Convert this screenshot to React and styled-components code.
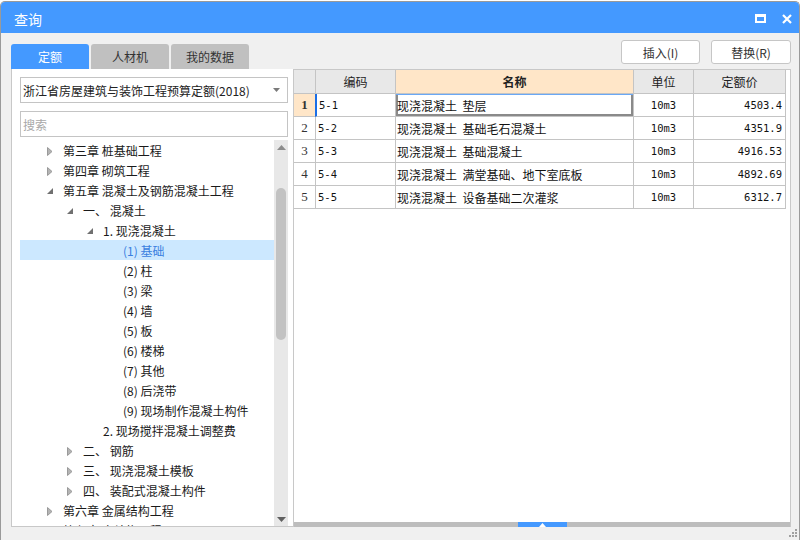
import React from 'react';
import styled, { createGlobalStyle } from 'styled-components';

const GlobalStyle = createGlobalStyle`
  html, body {
    margin: 0;
    padding: 0;
    background: #fff;
  }
  body {
    font-family: "Noto Sans CJK SC", "Noto Sans", sans-serif;
    font-size: 12px;
    color: #222;
  }
  * {
    box-sizing: border-box;
  }
`;

const Screen = styled.div`
  width: 800px;
  height: 540px;
  overflow: hidden;
  padding-top: 1px;
  background: #fff;
`;

const Dialog = styled.div`
  position: relative;
  height: 539px;
  display: flex;
  flex-direction: column;
  border: 1px solid #9a9a9a;
  border-bottom: none;
  border-radius: 5px 5px 0 0;
  overflow: hidden;
  background: #f0f0f0;
`;

const TitleBar = styled.div`
  height: 31px;
  flex-shrink: 0;
  display: flex;
  align-items: center;
  justify-content: space-between;
  padding: 2px 7px 0 13px;
  background: #4499ff;
  color: #fff;
  font-size: 14px;
`;

const WinButtons = styled.div`
  display: flex;
  align-items: center;
  gap: 16px;
`;

const Body = styled.div`
  flex: 1;
  display: flex;
  flex-direction: column;
  padding: 0 8px 0 10px;
`;

const TopBar = styled.div`
  height: 36px;
  display: flex;
  justify-content: space-between;
`;

const Tabs = styled.div`
  display: flex;
  gap: 2px;
  align-self: flex-end;
`;

const Tab = styled.div`
  width: ${p => p.$w || 78}px;
  height: 25px;
  display: flex;
  align-items: center;
  justify-content: center;
  border-radius: 3px 3px 0 0;
  background: ${p => (p.$active ? '#4499ff' : '#c0c0c0')};
  color: ${p => (p.$active ? '#fff' : '#333')};
  font-size: 12px;
`;

const Actions = styled.div`
  display: flex;
  gap: 11px;
  margin-top: 7px;
`;

const Button = styled.button`
  width: ${p => p.$w}px;
  height: 24px;
  padding: 0;
  background: #fff;
  border: 1px solid #c6c6c6;
  border-radius: 3px;
  font-family: inherit;
  font-size: 12px;
  color: #333;
`;

const Main = styled.div`
  height: 458px;
  display: flex;
`;

const LeftPanel = styled.div`
  width: 282px;
  display: flex;
  flex-direction: column;
  padding: 8px 5px 0 8px;
  background: #fff;
  border-left: 1px solid #c8c8c8;
  border-bottom: 1px solid #c8c8c8;
`;

const Select = styled.div`
  height: 26px;
  display: flex;
  align-items: center;
  justify-content: space-between;
  padding: 0 7px 0 2px;
  border: 1px solid #c4c4c4;
  font-size: 12px;
  color: #222;
`;

const Search = styled.div`
  height: 26px;
  margin-top: 8px;
  display: flex;
  align-items: center;
  padding-left: 2px;
  border: 1px solid #c4c4c4;
  color: #a8a8a8;
  font-size: 12px;
`;

const TreeArea = styled.div`
  flex: 1;
  margin-top: 3px;
  display: flex;
  overflow: hidden;
`;

const TreeList = styled.div`
  flex: 1;
  overflow: hidden;
`;

const TreeRow = styled.div`
  height: 20px;
  display: flex;
  align-items: center;
  padding-left: ${p => 23 + p.$level * 20}px;
  background: ${p => (p.$selected ? '#cce8ff' : 'transparent')};
  color: ${p => (p.$selected ? '#3a7fe0' : '#1a1a1a')};
  font-size: 12px;
  white-space: pre;
`;

const Toggle = styled.span`
  width: 20px;
  height: 20px;
  flex-shrink: 0;
  display: flex;
  align-items: center;
  padding: 2px 0 0 4px;
`;

const VScroll = styled.div`
  width: 14px;
  display: flex;
  flex-direction: column;
  align-items: center;
  background: #e8e8e8;
`;

const ScrollArrow = styled.div`
  height: 14px;
  display: flex;
  align-items: center;
  justify-content: center;
`;

const Thumb = styled.div`
  width: 10px;
  height: 152px;
  margin-top: 34px;
  border-radius: 5px;
  background: #c2c2c2;
`;

const Filler = styled.div`
  flex: 1;
`;

const RightPanel = styled.div`
  width: 498px;
  margin-left: 0;
  display: flex;
  flex-direction: column;
  background: #fff;
  border: 1px solid #c8c8c8;
  border-bottom: none;
`;

const Grid = styled.div`
  display: grid;
  grid-template-columns: 22px 80px 238px 60px 92px;
  width: 492px;
`;

const Cell = styled.div`
  height: ${p => (p.$head ? 24 : 23)}px;
  display: flex;
  align-items: center;
  justify-content: ${p => p.$align || 'flex-start'};
  padding: ${p => p.$pad || '0'};
  border-right: 1px solid #c4c4c4;
  border-bottom: 1px solid #c4c4c4;
  background: ${p => p.$bg || '#fff'};
  font-weight: ${p => (p.$bold ? 700 : 400)};
  white-space: pre;
  overflow: hidden;
`;

const HeadCell = styled(Cell)`
  font-size: 12px;
  color: #222;
`;

const NumCell = styled(Cell)`
  font-family: "Liberation Serif", serif;
  font-size: 13px;
  color: #333;
`;

const MonoCell = styled(Cell)`
  font-family: "DejaVu Sans Mono", "Liberation Mono", monospace;
  font-size: 10.5px;
  color: #111;
  border-left: ${p => (p.$mark ? '2px solid #1a6ee6' : 'none')};
  margin-left: ${p => (p.$mark ? '-1px' : '0')};
`;

const NameCell = styled(Cell)`
  font-size: 12px;
  color: #111;
  box-shadow: ${p => (p.$focus ? 'inset 0 1px 0 #6aa8f5, inset 2px 0 0 #8a8a8a, inset -2px 0 0 #8a8a8a, inset 0 -2px 0 #8a8a8a' : 'none')};
`;

const HScroll = styled.div`
  height: 5px;
  margin-top: auto;
  display: flex;
  justify-content: center;
  background: #bdbdbd;
`;

const HThumb = styled.div`
  width: 49px;
  display: flex;
  align-items: center;
  justify-content: center;
  background: #4499ff;
`;

const Grip = styled.svg`
  position: absolute;
  right: 1px;
  bottom: 2px;
`;

const tree = [
  { level: 0, state: 'closed', text: '第三章 桩基础工程' },
  { level: 0, state: 'closed', text: '第四章 砌筑工程' },
  { level: 0, state: 'open', text: '第五章 混凝土及钢筋混凝土工程' },
  { level: 1, state: 'open', text: '一、 混凝土' },
  { level: 2, state: 'open', text: '1. 现浇混凝土' },
  { level: 3, text: '(1) 基础', selected: true },
  { level: 3, text: '(2) 柱' },
  { level: 3, text: '(3) 梁' },
  { level: 3, text: '(4) 墙' },
  { level: 3, text: '(5) 板' },
  { level: 3, text: '(6) 楼梯' },
  { level: 3, text: '(7) 其他' },
  { level: 3, text: '(8) 后浇带' },
  { level: 3, text: '(9) 现场制作混凝土构件' },
  { level: 2, text: '2. 现场搅拌混凝土调整费' },
  { level: 1, state: 'closed', text: '二、 钢筋' },
  { level: 1, state: 'closed', text: '三、 现浇混凝土模板' },
  { level: 1, state: 'closed', text: '四、 装配式混凝土构件' },
  { level: 0, state: 'closed', text: '第六章 金属结构工程' },
  { level: 0, state: 'closed', text: '第七章 木结构工程' },
];

const rows = [
  { no: 1, code: '5-1', name: '现浇混凝土  垫层', unit: '10m3', price: '4503.4' },
  { no: 2, code: '5-2', name: '现浇混凝土  基础毛石混凝土', unit: '10m3', price: '4351.9' },
  { no: 3, code: '5-3', name: '现浇混凝土  基础混凝土', unit: '10m3', price: '4916.53' },
  { no: 4, code: '5-4', name: '现浇混凝土  满堂基础、地下室底板', unit: '10m3', price: '4892.69' },
  { no: 5, code: '5-5', name: '现浇混凝土  设备基础二次灌浆', unit: '10m3', price: '6312.7' },
];

function Arrow({ state }) {
  if (state === 'closed') {
    return (
      <svg width="6" height="9" viewBox="0 0 6 9">
        <polygon points="0.5,0.5 5,4.5 0.5,8.5" fill="#b4b4b4" stroke="#9a9a9a" strokeWidth="1" />
      </svg>
    );
  }
  if (state === 'open') {
    return (
      <svg width="6" height="6" viewBox="0 0 6 6">
        <polygon points="6,0 6,6 0,6" fill="#707070" />
      </svg>
    );
  }
  return null;
}

export default function App() {
  return (
    <Screen>
      <GlobalStyle />
      <Dialog>
        <TitleBar>
          <span>查询</span>
          <WinButtons>
            <svg width="11" height="9" viewBox="0 0 11 9">
              <rect x="1" y="1.5" width="9" height="6.5" fill="none" stroke="#fff" strokeWidth="2" />
              <rect x="0" y="0" width="11" height="3" fill="#fff" />
            </svg>
            <svg width="10" height="10" viewBox="0 0 10 10">
              <path d="M1 1 L9 9 M9 1 L1 9" stroke="#fff" strokeWidth="2.2" />
            </svg>
          </WinButtons>
        </TitleBar>
        <Body>
          <TopBar>
            <Tabs>
              <Tab $active>定额</Tab>
              <Tab $w={78}>人材机</Tab>
              <Tab $w={78}>我的数据</Tab>
            </Tabs>
            <Actions>
              <Button $w={79}>插入(I)</Button>
              <Button $w={80}>替换(R)</Button>
            </Actions>
          </TopBar>
          <Main>
            <LeftPanel>
              <Select>
                <span>浙江省房屋建筑与装饰工程预算定额(2018)</span>
                <svg width="7" height="4" viewBox="0 0 7 4">
                  <polygon points="0,0 7,0 3.5,4" fill="#7a7a7a" />
                </svg>
              </Select>
              <Search>搜索</Search>
              <TreeArea>
                <TreeList>
                  {tree.map((t, i) => (
                    <TreeRow key={i} $level={t.level} $selected={t.selected}>
                      <Toggle>
                        <Arrow state={t.state} />
                      </Toggle>
                      {t.text}
                    </TreeRow>
                  ))}
                </TreeList>
                <VScroll>
                  <ScrollArrow>
                    <svg width="9" height="5" viewBox="0 0 9 5">
                      <polygon points="0,5 9,5 4.5,0" fill="#8c8c8c" />
                    </svg>
                  </ScrollArrow>
                  <Thumb />
                  <Filler />
                  <ScrollArrow>
                    <svg width="9" height="5" viewBox="0 0 9 5">
                      <polygon points="0,0 9,0 4.5,5" fill="#606060" />
                    </svg>
                  </ScrollArrow>
                </VScroll>
              </TreeArea>
            </LeftPanel>
            <RightPanel>
              <Grid>
                <HeadCell $head $bg="#e8e8e8" />
                <HeadCell $head $bg="#e8e8e8" $align="center">编码</HeadCell>
                <HeadCell $head $bg="#ffe6c8" $align="center" $bold>名称</HeadCell>
                <HeadCell $head $bg="#e8e8e8" $align="center">单位</HeadCell>
                <HeadCell $head $bg="#e8e8e8" $align="center">定额价</HeadCell>
                {rows.map(r => (
                  <React.Fragment key={r.no}>
                    <NumCell $align="center" $bold={r.no === 1} $bg={r.no === 1 ? '#ffe6c8' : '#fff'}>
                      {r.no}
                    </NumCell>
                    <MonoCell $pad="0 0 0 2px" $mark={r.no === 1}>{r.code}</MonoCell>
                    <NameCell $pad="0 0 0 1px" $focus={r.no === 1}>{r.name}</NameCell>
                    <MonoCell $align="center">{r.unit}</MonoCell>
                    <MonoCell $align="flex-end" $pad="0 3px 0 0">{r.price}</MonoCell>
                  </React.Fragment>
                ))}
              </Grid>
              <HScroll>
                <HThumb>
                  <svg width="7" height="4" viewBox="0 0 7 4">
                    <polygon points="0,4 7,4 3.5,0" fill="#fff" />
                  </svg>
                </HThumb>
              </HScroll>
            </RightPanel>
          </Main>
        </Body>
        <Grip width="10" height="10" viewBox="0 0 10 10">
          <rect x="7" y="1" width="2" height="2" fill="#a0a0a0" />
          <rect x="4" y="4" width="2" height="2" fill="#a0a0a0" />
          <rect x="7" y="4" width="2" height="2" fill="#a0a0a0" />
          <rect x="1" y="7" width="2" height="2" fill="#a0a0a0" />
          <rect x="4" y="7" width="2" height="2" fill="#a0a0a0" />
          <rect x="7" y="7" width="2" height="2" fill="#a0a0a0" />
        </Grip>
      </Dialog>
    </Screen>
  );
}
